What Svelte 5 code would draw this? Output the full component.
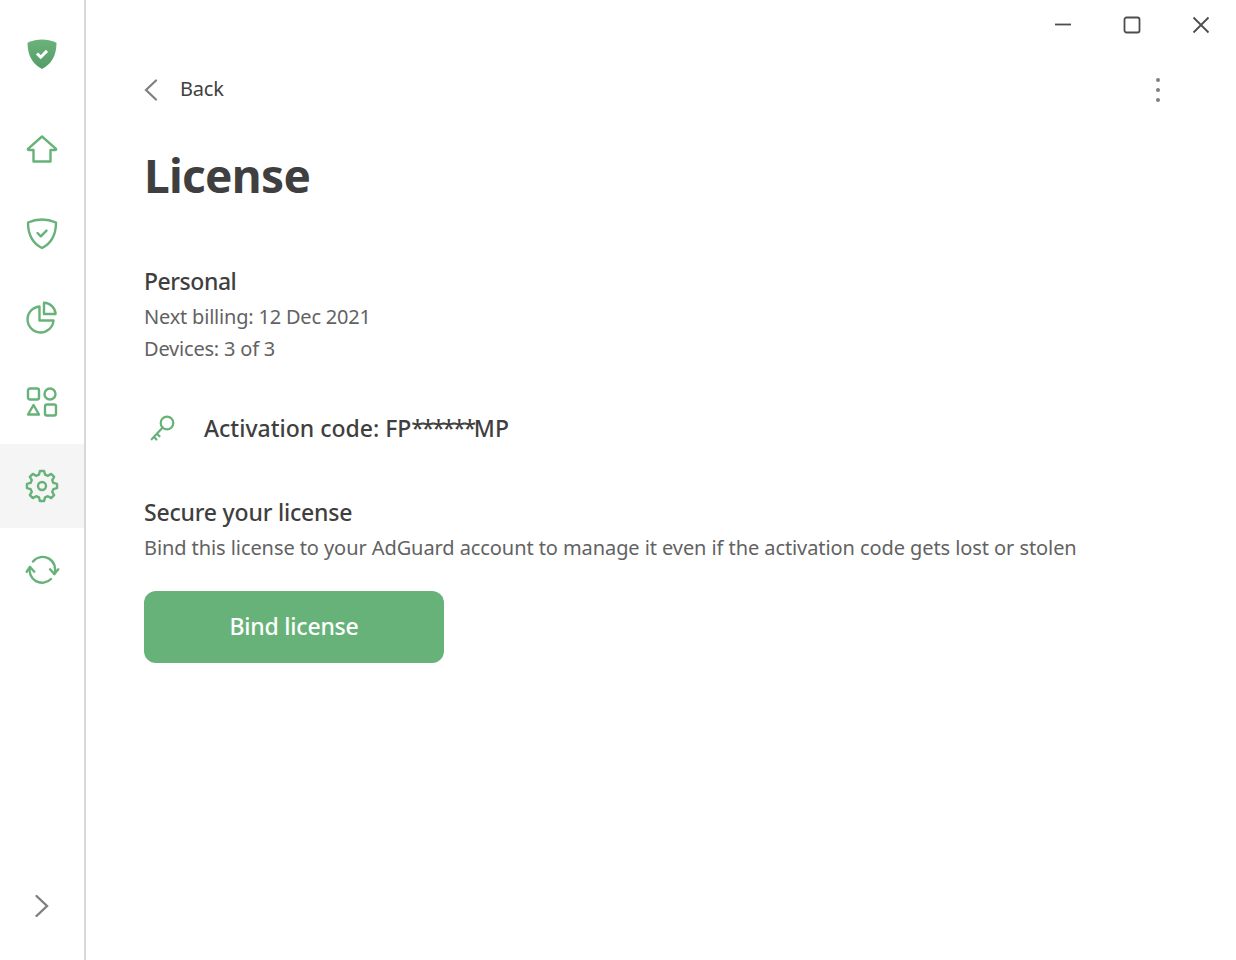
<script>
	// sidebar entries, the settings row is the selected one
	const navItems = [
		{ id: 'home' },
		{ id: 'protection' },
		{ id: 'stats' },
		{ id: 'apps' },
		{ id: 'settings', active: true },
		{ id: 'sync' }
	];

	// eight toothed gear outline, centred in the 36 box
	function gearPath() {
		const teeth = 8;
		const outer = 15.2;
		const inner = 11.8;
		const pts = [];
		for (let i = 0; i < teeth; i++) {
			const a = (i * 360) / teeth - 90;
			for (const [da, r] of [[-15, inner], [-8, outer], [8, outer], [15, inner]]) {
				const rad = ((a + da) * Math.PI) / 180;
				pts.push(`${(18 + r * Math.cos(rad)).toFixed(2)} ${(18 + r * Math.sin(rad)).toFixed(2)}`);
			}
		}
		return 'M' + pts.join('L') + 'Z';
	}
	const gear = gearPath();
</script>

<div class="window">
	<aside class="sidebar">
		<div class="logo">
			<svg width="32" height="32" viewBox="0 0 32 32">
				<defs>
					<linearGradient id="shield" x1="0" y1="0" x2="0" y2="1">
						<stop offset="0" stop-color="#6cb27a" />
						<stop offset="1" stop-color="#539c69" />
					</linearGradient>
				</defs>
				<path
					d="M16 1.500C11.500 1.500 6.500 2.600 1.500 4.800 1.500 18 7 26.500 16 31 25 26.500 30.500 18 30.500 4.800 25.500 2.600 20.500 1.500 16 1.500Z"
					fill="url(#shield)"
				/>
				<path d="M11 15.500l3.700 3.700 6.300-6.300" fill="none" stroke="#fff" stroke-width="3" />
			</svg>
		</div>
		<nav>
			{#each navItems as item}
				<div class="nav-item" class:active={item.active}>
					<svg width="36" height="36" viewBox="0 0 36 36" class="icon">
						{#if item.id === 'home'}
							<path d="M18 4.500L4 16.800Q3.500 18 5 18H9.500V29.500H26.500V18H31Q32.500 18 32 16.800Z" />
						{:else if item.id === 'protection'}
							<path d="M18 3.500C13.500 3.500 8.500 4.500 4 6.500 4 18 8 27 18 32 28 27 32 18 32 6.500 27.500 4.500 22.500 3.500 18 3.500Z" />
							<path d="M13.500 17l3.300 3.300 5.700-5.700" />
						{:else if item.id === 'stats'}
							<path d="M15.500 6.500A13 13 0 1 0 29.500 20.500H15.500Z" />
							<path d="M20 2.800V14H31.500C31.500 8 26 2.800 20 2.800Z" />
						{:else if item.id === 'apps'}
							<rect x="4" y="4.500" width="11" height="11" rx="2" />
							<circle cx="26" cy="10" r="5.500" />
							<path d="M9.500 21L4 30.500H15Z" />
							<rect x="21" y="20.500" width="11" height="11" rx="2" />
						{:else if item.id === 'settings'}
							<circle cx="18" cy="18" r="4" />
							<path d={gear} />
						{:else if item.id === 'sync'}
							<path d="M6 15A12.500 12.500 0 0 0 27 27" />
							<path d="M9 9.500A12.500 12.500 0 0 1 30.300 22" />
							<path d="M2.700 19.700L6 15 10.300 19.700" />
							<path d="M26 17.300L30.300 22 34.300 17.300" />
						{/if}
					</svg>
				</div>
			{/each}
		</nav>
		<div class="expand">
			<svg width="20" height="28" viewBox="0 0 20 28">
				<path d="M4.500 4l10.500 10L4.500 24" />
			</svg>
		</div>
	</aside>

	<main class="content">
		<div class="titlebar">
			<button class="win-btn" aria-label="Minimize">
				<svg width="18" height="18" viewBox="0 0 18 18"><path d="M1 8.500h16" /></svg>
			</button>
			<button class="win-btn" aria-label="Maximize">
				<svg width="18" height="18" viewBox="0 0 18 18"><rect x="1.500" y="1.500" width="15" height="15" rx="2" /></svg>
			</button>
			<button class="win-btn" aria-label="Close">
				<svg width="18" height="18" viewBox="0 0 18 18"><path d="M1.500 1.500l15 15M16.500 1.500l-15 15" /></svg>
			</button>
		</div>

		<div class="page">
			<div class="topline">
				<a class="back" href="#back">
					<svg width="14" height="22" viewBox="0 0 14 22"><path d="M12 1.500L2 11l10 9.500" /></svg>
					<span>Back</span>
				</a>
				<div class="more"><i></i><i></i><i></i></div>
			</div>

			<h1>License</h1>

			<section class="plan">
				<h2>Personal</h2>
				<p>Next billing: 12 Dec 2021</p>
				<p>Devices: 3 of 3</p>
			</section>

			<div class="code">
				<svg width="30" height="30" viewBox="0 0 30 30">
					<circle cx="19" cy="10" r="6.300" />
					<path d="M14.700 14.500L3.700 26.300M6 24l2.500 2.500M9 20.800l2.500 2.500" />
				</svg>
				<span>Activation code: FP<span class="stars">******</span>MP</span>
			</div>

			<section class="secure">
				<h2>Secure your license</h2>
				<p>Bind this license to your AdGuard account to manage it even if the activation code gets lost or stolen</p>
			</section>

			<button class="bind">Bind license</button>
		</div>
	</main>
</div>

<style>
	:global(body) {
		background: #fff;
	}

	.window {
		display: flex;
		height: 960px;
		font-family: 'Noto Sans', 'Open Sans', sans-serif;
		color: #3f3f3f;
		overflow: hidden;
	}

	.sidebar {
		width: 84px;
		flex-shrink: 0;
		border-right: 2px solid #d9d9d9;
		display: flex;
		flex-direction: column;
	}

	.logo {
		height: 84px;
		margin-top: 12px;
		margin-bottom: 12px;
		display: flex;
		align-items: center;
		justify-content: center;
	}

	.nav-item {
		height: 84px;
		display: flex;
		align-items: center;
		justify-content: center;
	}

	.nav-item.active {
		background: #f5f5f5;
	}

	.icon {
		fill: none;
		stroke: #67b279;
		stroke-width: 2.400;
		stroke-linejoin: round;
		stroke-linecap: round;
	}

	.expand {
		margin-top: auto;
		height: 28px;
		margin-bottom: 40px;
		display: flex;
		justify-content: center;
	}

	.expand svg {
		fill: none;
		stroke: #7f7f7f;
		stroke-width: 2.400;
		stroke-linecap: round;
	}

	.content {
		flex: 1;
		min-width: 0;
	}

	.titlebar {
		height: 49px;
		display: flex;
		justify-content: flex-end;
		align-items: center;
		gap: 51px;
		padding-right: 26px;
	}

	.win-btn {
		border: none;
		background: none;
		padding: 0;
		width: 18px;
		height: 18px;
		display: block;
	}

	.win-btn svg {
		display: block;
		fill: none;
		stroke: #4d4d4d;
		stroke-width: 1.800;
	}

	.page {
		padding: 0 70px 0 58px;
	}

	.topline {
		display: flex;
		justify-content: space-between;
		align-items: center;
		height: 36px;
		margin-top: 22px;
	}

	.back {
		display: flex;
		align-items: center;
		gap: 22px;
		color: #3f3f3f;
		text-decoration: none;
		font-size: 20px;
		letter-spacing: -0.2px;
	}

	.back span {
		margin-top: -2px;
	}

	.back svg {
		fill: none;
		stroke: #7f7f7f;
		stroke-width: 2.200;
		stroke-linecap: round;
		margin-top: 1px;
	}

	.more {
		display: flex;
		flex-direction: column;
		gap: 6px;
		margin-right: 6px;
		margin-top: 2px;
	}

	.more i {
		display: block;
		width: 4px;
		height: 4px;
		border-radius: 50%;
		background: #7f7f7f;
	}

	h1 {
		margin: 36px 0 0;
		font-size: 46px;
		line-height: 64px;
		font-weight: 700;
		letter-spacing: -0.7px;
	}

	h2 {
		margin: 0 0 4px;
		font-size: 23px;
		line-height: 32px;
		font-weight: 500;
		letter-spacing: -0.2px;
	}

	p {
		margin: 0;
		font-size: 20px;
		line-height: 32px;
		color: #626262;
		letter-spacing: -0.08px;
	}

	.plan h2 {
		letter-spacing: -0.45px;
	}

	.plan p {
		letter-spacing: -0.2px;
	}

	.plan {
		margin-top: 58px;
	}

	.code {
		display: flex;
		align-items: center;
		gap: 26px;
		margin-top: 39px;
		height: 48px;
		font-size: 23px;
		font-weight: 500;
	}

	.stars {
		letter-spacing: -2.2px;
	}

	.code svg {
		margin-left: 4px;
		fill: none;
		stroke: #67b279;
		stroke-width: 2.200;
		stroke-linecap: round;
	}

	.secure {
		margin-top: 44px;
	}

	.bind {
		display: block;
		margin-top: 27px;
		padding: 0 0 2px;
		width: 300px;
		height: 72px;
		border: none;
		border-radius: 12px;
		background: #67b279;
		color: #fff;
		font-family: inherit;
		font-size: 23px;
		font-weight: 500;
		letter-spacing: -0.2px;
	}
</style>
